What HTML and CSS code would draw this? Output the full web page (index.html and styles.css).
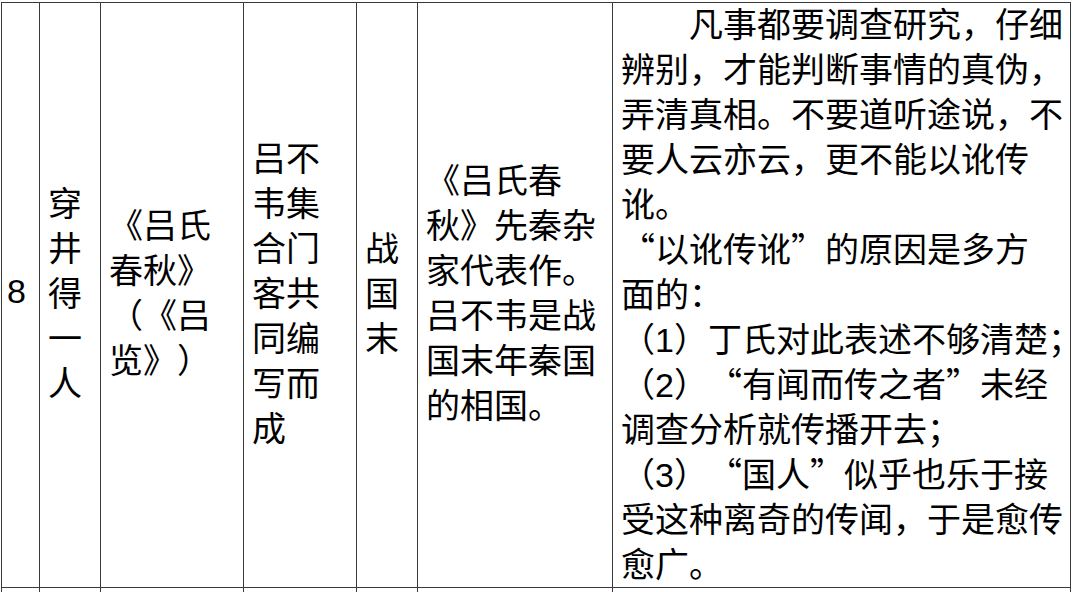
FILE: index.html
```html
<!DOCTYPE html>
<html lang="zh-CN">
<head>
<meta charset="utf-8">
<title>穿井得一人</title>
<link rel="stylesheet" href="styles.css">
</head>
<body>
<div class="sheet">
  <div class="cell c-no"><span class="num">8</span></div>
  <div class="cell c-title">穿井得一人</div>
  <div class="cell c-src">《吕氏春秋》（《吕览》）</div>
  <div class="cell c-author">吕不韦集合门客共同编写而成</div>
  <div class="cell c-era">战国末</div>
  <div class="cell c-note">《吕氏春秋》先秦杂家代表作。吕不韦是战国末年秦国的相国。</div>
  <div class="cell c-text">
    <p class="lead">凡事都要调查研究，仔细<br>辨别，才能判断事情的真伪，<br>弄清真相。不要道听途说，不<br>要人云亦云，更不能以讹传<br>讹。</p>
    <p>“以讹传讹”的原因是多方<br>面的：</p>
    <p>（<span class="num">1</span>）丁氏对此表述不够清楚；</p>
    <p>（<span class="num">2</span>）“有闻而传之者”未经<br>调查分析就传播开去；</p>
    <p>（<span class="num">3</span>）“国人”似乎也乐于接<br>受这种离奇的传闻，于是愈传<br>愈广。</p>
  </div>

  <div class="cell c-empty"></div>
  <div class="cell c-empty"></div>
  <div class="cell c-empty"></div>
  <div class="cell c-empty"></div>
  <div class="cell c-empty"></div>
  <div class="cell c-empty"></div>
  <div class="cell c-empty"></div>
</div>
</body>
</html>
```

FILE: styles.css
```css
html, body {
  margin: 0;
  padding: 0;
  background: #ffffff;
}

body {
  width: 1080px;
  height: 592px;
  overflow: hidden;
  font-family: "Noto Sans CJK SC", "Liberation Sans", sans-serif;
  font-size: 34px;
  line-height: 45px;
  color: #000000;
  text-spacing-trim: space-all;
  font-feature-settings: "fwid";
}

.sheet {
  display: grid;
  grid-template-columns: 38px 61px 143px 113px 61px 195px 458px;
  width: 1069px;
  margin: 2px 0 0 1px;
  border-top: 1px solid #3a3a3a;
  border-left: 1px solid #3a3a3a;
}

.cell {
  box-sizing: border-box;
  border-right: 1px solid #3a3a3a;
  border-bottom: 1px solid #3a3a3a;
  padding: 0 8px 8px 8px;
  display: flex;
  align-items: center;
  word-break: normal;
  line-break: strict;
}

.c-no {
  padding-left: 5px;
  padding-right: 2px;
}

.num {
  font-family: "Liberation Sans", sans-serif;
  font-feature-settings: normal;
  line-height: 34px;
}

.c-text {
  display: block;
  padding: 0 6px 2px 8px;
  white-space: nowrap;
}

.c-text p {
  margin: 0;
}

.c-text .lead {
  margin-top: -3px;
  text-indent: 2em;
}

.c-empty {
  height: 4px;
  padding: 0;
  border-bottom: 0;
}
```
